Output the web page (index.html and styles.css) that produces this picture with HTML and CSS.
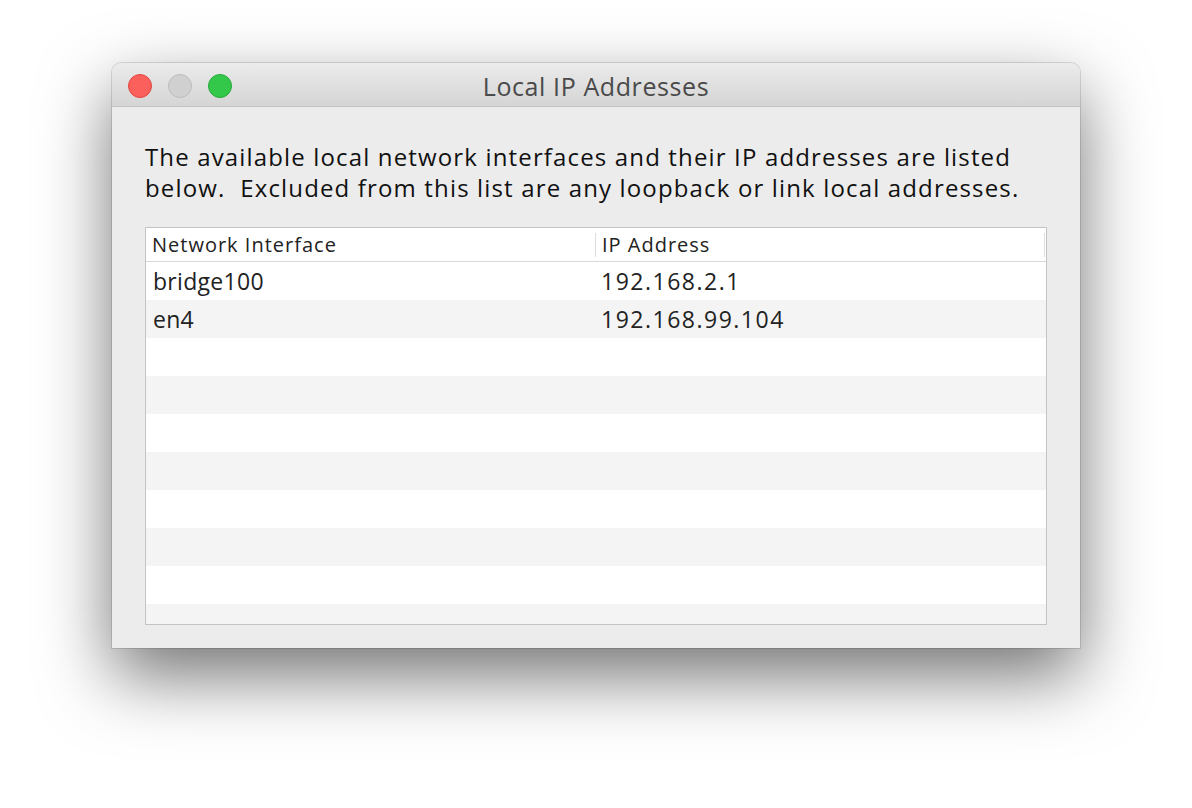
FILE: index.html
```html
<!DOCTYPE html>
<html lang="en">
<head>
<meta charset="utf-8">
<title>Local IP Addresses</title>
<link rel="stylesheet" href="styles.css">
</head>
<body>
<div class="window">
  <div class="titlebar">
    <div class="lights">
      <span class="light close"></span>
      <span class="light min"></span>
      <span class="light zoom"></span>
    </div>
    <div class="title">Local IP Addresses</div>
    <div></div>
  </div>
  <div class="content">
    <p class="intro">The available local network interfaces and their IP addresses are listed below.&nbsp; Excluded from this list are any loopback or link local addresses.</p>
    <div class="table">
      <div class="thead">
        <div class="th">Network Interface</div>
        <div class="th sep">IP Address</div>
        <div class="th-end"></div>
      </div>
      <div class="tbody">
        <div class="row"><div class="td">bridge100</div><div class="td td2">192.168.2.1</div></div>
        <div class="row"><div class="td">en4</div><div class="td td2">192.168.99.104</div></div>
        <div class="row"></div>
        <div class="row"></div>
        <div class="row"></div>
        <div class="row"></div>
        <div class="row"></div>
        <div class="row"></div>
        <div class="row"></div>
        <div class="row"></div>
      </div>
    </div>
  </div>
</div>
</body>
</html>
```

FILE: styles.css
```css
html, body {
  margin: 0;
  padding: 0;
  background: #ffffff;
}
body {
  font-family: "Open Sans", "Inter", "Liberation Sans", sans-serif;
  padding: 63px 0 0 112px;
  height: 808px;
  box-sizing: border-box;
  overflow: hidden;
}
.window {
  width: 968px;
  background: #ececec;
  border-radius: 9px 9px 0 0;
  box-shadow: 0 28px 70px rgba(0, 0, 0, 0.55), 0 0 0 1px rgba(0, 0, 0, 0.12);
  overflow: hidden;
}
.titlebar {
  height: 43px;
  border-bottom: 1px solid #c3c3c3;
  background: linear-gradient(#ebebeb, #d5d5d5);
  display: grid;
  grid-template-columns: 1fr auto 1fr;
  align-items: center;
}
.lights {
  display: flex;
  gap: 16px;
  padding-left: 16px;
  padding-top: 2px;
}
.light {
  width: 22px;
  height: 22px;
  border-radius: 50%;
  border: 1px solid;
}
.close { background: #fc605c; border-color: #e1463f; }
.min { background: #d0d0d0; border-color: #bcbcbc; }
.zoom { background: #34c84a; border-color: #25a93a; }
.title {
  font-size: 25px;
  letter-spacing: 0.6px;
  color: #4a4a4a;
  padding-top: 2px;
}
.content {
  padding: 34px 33px 23px;
}
.intro {
  margin: 0 0 24px;
  font-size: 24px;
  letter-spacing: 1.15px;
  line-height: 31px;
  color: #111;
}
.table {
  height: 398px;
  box-sizing: border-box;
  border: 1px solid #c4c4c4;
  background: #fff;
  overflow: hidden;
}
.thead {
  height: 33px;
  border-bottom: 1px solid #d8d8d8;
  display: flex;
  align-items: center;
}
.th {
  font-size: 20px;
  letter-spacing: 1px;
  color: #222;
  line-height: 24px;
  padding-left: 6px;
  width: 443px;
}
.th.sep {
  border-left: 1px solid #dedede;
  flex: 1;
  width: auto;
}
.th-end {
  width: 1px;
  height: 24px;
  background: #dedede;
  margin-right: 1px;
}
.row {
  height: 38px;
  display: grid;
  grid-template-columns: 449px 1fr;
  align-items: center;
}
.row:nth-child(even) {
  background: #f4f4f4;
}
.td {
  font-size: 23px;
  letter-spacing: 0.3px;
  color: #222;
  padding-left: 7px;
}
.td2 {
  padding-left: 6px;
  letter-spacing: 1.5px;
}
```
